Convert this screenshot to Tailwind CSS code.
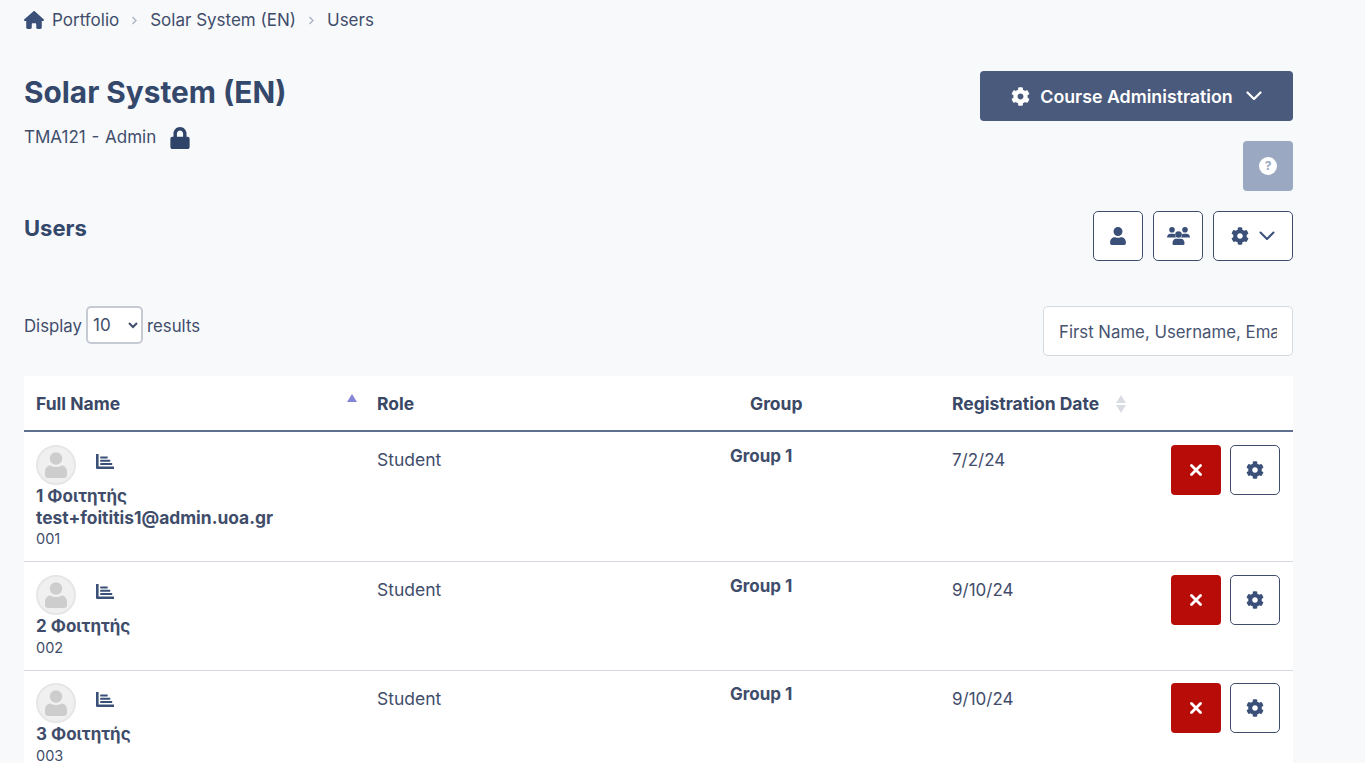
<!DOCTYPE html>
<html lang="en">
<head>
  <meta charset="UTF-8" />
  <title>Users</title>
  <script src="https://cdn.jsdelivr.net/npm/@tailwindcss/browser@4"></script>
</head>
<body class="bg-[#f8f9fb] font-['Inter',sans-serif] text-[#3f4d6b] h-[763px] overflow-hidden">
  <main class="w-[1293px] pl-6">
    <!-- breadcrumb -->
    <nav class="flex items-center h-10 pt-[2px] text-[17px]">
      <svg class="w-5 h-[18px] -mt-[2px] text-[#3a5078] mr-2" viewBox="0 0 576 512" fill="currentColor"><path d="M575.800 255.500c0 18-15 32.100-32 32.100h-32l.7 160.200c0 2.700-.2 5.400-.5 8.100V472c0 22.100-17.900 40-40 40H456c-1.100 0-2.200 0-3.300-.1-1.400.1-2.800.1-4.200.1H392c-22.100 0-40-17.900-40-40v-88c0-17.700-14.300-32-32-32h-64c-17.700 0-32 14.300-32 32v88c0 22.100-17.900 40-40 40h-55.900c-1.500 0-3-.1-4.500-.2-1.200.1-2.400.2-3.600.2H104c-22.100 0-40-17.900-40-40V360c0-.9 0-1.900.1-2.800v-69.600H32c-18 0-32-14-32-32.100 0-9 3-17 10-24L266.400 8c7-7 15-8 22-8s15 2 21 7l255.400 224.500c8 7 12 15 11 24z"/></svg>
      <a>Portfolio</a>
      <svg class="w-[7px] h-[9px] mx-3 -mt-[2px] text-[#aab2c2]" viewBox="0 0 7 9" fill="none" stroke="currentColor" stroke-width="1.300"><path d="M1.500 1l3.500 3.500L1.500 8"/></svg>
      <a>Solar System (EN)</a>
      <svg class="w-[7px] h-[9px] mx-3 -mt-[2px] text-[#aab2c2]" viewBox="0 0 7 9" fill="none" stroke="currentColor" stroke-width="1.300"><path d="M1.500 1l3.500 3.500L1.500 8"/></svg>
      <a>Users</a>
    </nav>

    <!-- course header -->
    <div class="flex justify-between items-start mt-[31px]">
      <div>
        <h1 class="text-[29.800px] leading-[42px] font-bold text-[#34486b]">Solar System (EN)</h1>
        <div class="flex items-center mt-[13px] h-6 text-[17px]">
          <span class="[word-spacing:1px]">TMA121 - Admin</span>
          <svg class="w-5 h-[22px] ml-[14px] text-[#2f4468]" viewBox="0 0 448 512" fill="currentColor"><path d="M400 224h-24v-72C376 68.200 307.800 0 224 0S72 68.200 72 152v72H48c-26.500 0-48 21.500-48 48v192c0 26.500 21.500 48 48 48h352c26.500 0 48-21.500 48-48V272c0-26.500-21.500-48-48-48zm-104 0H152v-72c0-39.700 32.300-72 72-72s72 32.300 72 72v72z"/></svg>
        </div>
      </div>
      <div class="flex flex-col items-end gap-5">
        <button class="flex items-center justify-center w-[313px] h-[50px] rounded-[4px] bg-[#4a5a7d] text-white font-semibold text-[17.800px]">
          <svg class="w-[19px] h-[19px] mr-[10px]" viewBox="0 0 512 512" fill="currentColor"><path d="M487.400 315.700l-42.600-24.600c4.300-23.200 4.300-47 0-70.200l42.600-24.600c4.900-2.800 7.100-8.600 5.500-14-11.100-35.600-30-67.800-54.700-94.600-3.800-4.100-10-5.100-14.800-2.300L380.800 110c-17.900-15.400-38.500-27.300-60.800-35.100V25.800c0-5.600-3.900-10.500-9.400-11.700-36.700-8.200-74.300-7.800-109.200 0-5.500 1.200-9.400 6.100-9.400 11.700V75c-22.200 7.900-42.800 19.800-60.800 35.100L88.700 85.500c-4.900-2.800-11-1.900-14.800 2.300-24.700 26.700-43.600 58.900-54.700 94.600-1.700 5.400.6 11.200 5.500 14L67.300 221c-4.300 23.200-4.300 47 0 70.200l-42.600 24.600c-4.900 2.800-7.100 8.600-5.500 14 11.100 35.600 30 67.800 54.700 94.600 3.800 4.100 10 5.100 14.800 2.300l42.600-24.600c17.900 15.400 38.500 27.300 60.800 35.100v49.200c0 5.600 3.900 10.500 9.400 11.700 36.700 8.200 74.300 7.800 109.200 0 5.500-1.200 9.400-6.100 9.400-11.700v-49.200c22.200-7.900 42.800-19.800 60.800-35.100l42.600 24.600c4.900 2.800 11 1.900 14.800-2.300 24.700-26.700 43.600-58.900 54.700-94.600 1.500-5.500-.7-11.300-5.600-14.100zM256 336c-44.100 0-80-35.900-80-80s35.900-80 80-80 80 35.900 80 80-35.900 80-80 80z"/></svg>
          <span class="pt-[2px]">Course Administration</span>
          <svg class="w-[16px] h-[10px] ml-[13px]" viewBox="0 0 16 10" fill="none" stroke="currentColor" stroke-width="2.200" stroke-linecap="round" stroke-linejoin="round"><path d="M1.500 1.500L8 8l6.500-6.500"/></svg>
        </button>
        <button class="flex items-center justify-center w-[50px] h-[50px] rounded-[4px] bg-[#9aa8c1]">
          <span class="flex items-center justify-center w-[18px] h-[18px] rounded-full bg-white text-[#9aa8c1] text-[12px] font-bold">?</span>
        </button>
      </div>
    </div>

    <!-- users heading -->
    <div class="flex justify-between items-start mt-5">
      <h2 class="text-[22px] leading-[34px] font-bold text-[#34486b]">Users</h2>
      <div class="flex gap-[10px]">
        <button class="flex items-center justify-center w-[50px] h-[50px] rounded-[5px] border border-[#3f4d6b] bg-white">
          <svg class="w-4 h-[18px] text-[#3a5078]" viewBox="0 0 448 512" fill="currentColor"><path d="M224 256c70.700 0 128-57.300 128-128S294.700 0 224 0 96 57.300 96 128s57.300 128 128 128zm89.600 32h-16.700c-22.200 10.200-46.900 16-72.900 16s-50.600-5.800-72.900-16h-16.700C60.200 288 0 348.200 0 422.400V464c0 26.500 21.500 48 48 48h352c26.500 0 48-21.500 48-48v-41.600c0-74.200-60.200-134.400-134.400-134.400z"/></svg>
        </button>
        <button class="flex items-center justify-center w-[50px] h-[50px] rounded-[5px] border border-[#3f4d6b] bg-white">
          <svg class="w-[23px] h-[18px] text-[#3a5078]" viewBox="0 0 23 18" fill="currentColor"><circle cx="5" cy="2.800" r="2.800"/><circle cx="18" cy="2.800" r="2.800"/><circle cx="11.500" cy="7.500" r="3.300"/><path d="M0 11c0-3 1.500-4.200 3.500-4.200h3c.6 0 1.100.2 1.500.5-.1 1.300.3 2.400 1 3.200H0zM23 11c0-3-1.500-4.200-3.500-4.200h-3c-.6 0-1.100.2-1.500.5.1 1.300-.3 2.400-1 3.200h9z"/><path d="M5.500 16.500c0-3 1.500-4.700 3.500-4.700h5c2 0 3.500 1.700 3.500 4.700 0 1-.7 1.500-1.700 1.500H7.200c-1 0-1.700-.5-1.700-1.500z"/></svg>
        </button>
        <button class="flex items-center justify-center w-[80px] h-[50px] rounded-[5px] border border-[#3f4d6b] bg-white text-[#3a5078]">
          <svg class="w-[18px] h-[18px] mr-[10px]" viewBox="0 0 512 512" fill="currentColor"><path d="M487.400 315.700l-42.600-24.600c4.300-23.200 4.300-47 0-70.200l42.600-24.600c4.900-2.800 7.100-8.600 5.500-14-11.100-35.600-30-67.800-54.700-94.600-3.800-4.100-10-5.100-14.800-2.300L380.800 110c-17.900-15.400-38.500-27.300-60.800-35.100V25.800c0-5.600-3.900-10.500-9.400-11.700-36.700-8.200-74.300-7.800-109.200 0-5.500 1.200-9.400 6.100-9.400 11.700V75c-22.200 7.900-42.800 19.800-60.800 35.100L88.700 85.500c-4.900-2.800-11-1.900-14.800 2.300-24.700 26.700-43.600 58.900-54.700 94.600-1.700 5.400.6 11.200 5.500 14L67.300 221c-4.300 23.200-4.300 47 0 70.200l-42.600 24.600c-4.900 2.800-7.100 8.600-5.500 14 11.100 35.600 30 67.800 54.700 94.600 3.800 4.100 10 5.100 14.800 2.300l42.600-24.600c17.900 15.400 38.500 27.300 60.800 35.100v49.200c0 5.600 3.900 10.500 9.400 11.700 36.700 8.200 74.300 7.800 109.200 0 5.500-1.200 9.400-6.100 9.400-11.700v-49.200c22.200-7.900 42.800-19.800 60.800-35.100l42.600 24.600c4.900 2.800 11 1.900 14.800-2.300 24.700-26.700 43.600-58.900 54.700-94.600 1.500-5.500-.7-11.300-5.600-14.100zM256 336c-44.100 0-80-35.900-80-80s35.900-80 80-80 80 35.900 80 80-35.900 80-80 80z"/></svg>
          <svg class="w-[16px] h-[10px]" viewBox="0 0 16 10" fill="none" stroke="currentColor" stroke-width="2" stroke-linecap="round" stroke-linejoin="round"><path d="M1.500 1.500L8 8l6.500-6.500"/></svg>
        </button>
      </div>
    </div>

    <!-- controls -->
    <div class="flex justify-between items-start mt-[45px]">
      <div class="flex items-center gap-1 text-[16.800px]">
        <span class="mt-[4px]">Display</span>
        <select class="w-[57px] h-[38px] pl-[1px] rounded-[5px] border-2 border-[#c5cad3] bg-white text-[17px] text-[#3f4d6b]"><option>10</option></select>
        <span class="mt-[4px]">results</span>
      </div>
      <input class="w-[250px] h-[50px] pl-[15px] pr-[15px] pt-[2px] rounded-[5px] border border-[#d5d9e0] bg-white text-[16.800px] placeholder:text-[#46536f]" placeholder="First Name, Username, Email" />
    </div>

    <!-- table -->
    <div class="mt-5 bg-white">
      <div class="flex h-[56px] border-b-2 border-[#5f6f8f] font-bold text-[17.500px] text-[#3a4866]">
        <div class="w-[341px] pl-3 pt-[15px] relative">Full Name
          <span class="absolute left-[323px] top-[18px] w-0 h-0 border-x-[5.500px] border-x-transparent border-b-[8px] border-b-[#8585d8]"></span>
        </div>
        <div class="w-[345px] pl-3 pt-[15px]">Role</div>
        <div class="w-[230px] pl-[40px] pt-[15px]">Group</div>
        <div class="flex-1 pl-3 pt-[15px] flex items-start">Registration Date
          <span class="ml-[17px] mt-[4px] flex flex-col gap-[2px]">
            <span class="w-0 h-0 border-x-[5.500px] border-x-transparent border-b-[8px] border-b-[#d9dce2]"></span>
            <span class="w-0 h-0 border-x-[5.500px] border-x-transparent border-t-[8px] border-t-[#d9dce2]"></span>
          </span>
        </div>
      </div>

      <!-- row 1 -->
      <div class="flex h-[130px] border-b border-[#d5d9e0] text-[17px]">
        <div class="w-[341px] pl-3 pt-[13px]">
          <div class="flex items-center">
            <div class="flex items-center justify-center w-10 h-10 rounded-full bg-[#f0f0f0] border-2 border-[#e6e6e6]">
              <svg class="w-[24px] h-[26px] text-[#cdcdcd]" viewBox="0 0 24 26" fill="currentColor"><circle cx="12" cy="6.500" r="6.200"/><path d="M1 20c0-4 2.500-6.500 5.500-6.500 1.500 1 3.500 1.600 5.500 1.600s4-.6 5.500-1.600c3 0 5.500 2.500 5.500 6.500v3c0 1.800-1.200 3-3 3H4c-1.800 0-3-1.200-3-3z"/></svg>
            </div>
            <svg class="w-[18px] h-[15px] ml-5 -mt-2 text-[#3a5078]" viewBox="0 0 18 15" fill="currentColor"><path d="M0 0h2.600v12.400H18V15H1.200A1.200 1.200 0 0 1 0 13.800z"/><rect x="4.200" y="2.400" width="7.500" height="2" rx=".4"/><rect x="4.200" y="5.800" width="10" height="2" rx=".4"/><rect x="4.200" y="9.100" width="12" height="2" rx=".4"/></svg>
          </div>
          <div class="font-bold leading-[22px]">1 Φοιτητής</div>
          <div class="font-bold leading-[22px] text-[17.400px]">test+foititis1@admin.uoa.gr</div>
          <div class="text-[14.500px] leading-[20px]">001</div>
        </div>
        <div class="w-[345px] pl-3 pt-[15px] text-[17.500px]">Student</div>
        <div class="w-[230px] pl-[20px] pt-[12px] font-bold">Group 1</div>
        <div class="w-[220px] pl-3 pt-[16px]">7/2/24</div>
        <div class="flex-1 flex justify-end gap-[9px] pr-[13px] pt-[13px]">
          <button class="flex items-center justify-center w-[50px] h-[50px] rounded-[4px] bg-[#b80c09]">
            <svg class="w-3 h-3 -mt-[1px] text-white" viewBox="0 0 12 12" fill="none" stroke="currentColor" stroke-width="2.800" stroke-linecap="round"><path d="M1.500 1.500l9 9M10.500 1.500l-9 9"/></svg>
          </button>
          <button class="flex items-center justify-center w-[50px] h-[50px] rounded-[5px] border border-[#3f4d6b] bg-white">
            <svg class="w-[18px] h-[18px] text-[#3a5078]" viewBox="0 0 512 512" fill="currentColor"><path d="M487.400 315.700l-42.600-24.600c4.300-23.200 4.300-47 0-70.200l42.600-24.600c4.900-2.800 7.100-8.600 5.500-14-11.100-35.600-30-67.800-54.700-94.600-3.800-4.100-10-5.100-14.800-2.300L380.800 110c-17.900-15.400-38.500-27.300-60.800-35.100V25.800c0-5.600-3.900-10.500-9.400-11.700-36.700-8.200-74.300-7.800-109.200 0-5.500 1.200-9.400 6.100-9.400 11.700V75c-22.200 7.900-42.800 19.800-60.800 35.100L88.700 85.500c-4.900-2.800-11-1.900-14.800 2.300-24.700 26.700-43.600 58.900-54.700 94.600-1.700 5.400.6 11.200 5.500 14L67.300 221c-4.300 23.200-4.300 47 0 70.200l-42.600 24.600c-4.900 2.800-7.100 8.600-5.500 14 11.100 35.600 30 67.800 54.700 94.600 3.800 4.100 10 5.100 14.800 2.300l42.600-24.600c17.900 15.400 38.500 27.300 60.800 35.100v49.200c0 5.600 3.900 10.500 9.400 11.700 36.700 8.200 74.300 7.800 109.200 0 5.500-1.200 9.400-6.100 9.400-11.700v-49.200c22.200-7.900 42.800-19.800 60.800-35.100l42.600 24.600c4.900 2.800 11 1.900 14.800-2.300 24.700-26.700 43.600-58.900 54.700-94.600 1.500-5.500-.7-11.300-5.600-14.100zM256 336c-44.100 0-80-35.900-80-80s35.900-80 80-80 80 35.900 80 80-35.900 80-80 80z"/></svg>
          </button>
        </div>
      </div>

      <!-- row 2 -->
      <div class="flex h-[109px] border-b border-[#d5d9e0] text-[17px]">
        <div class="w-[341px] pl-3 pt-[13px]">
          <div class="flex items-center">
            <div class="flex items-center justify-center w-10 h-10 rounded-full bg-[#f0f0f0] border-2 border-[#e6e6e6]">
              <svg class="w-[24px] h-[26px] text-[#cdcdcd]" viewBox="0 0 24 26" fill="currentColor"><circle cx="12" cy="6.500" r="6.200"/><path d="M1 20c0-4 2.500-6.500 5.500-6.500 1.500 1 3.500 1.600 5.500 1.600s4-.6 5.500-1.600c3 0 5.500 2.500 5.500 6.500v3c0 1.800-1.200 3-3 3H4c-1.800 0-3-1.200-3-3z"/></svg>
            </div>
            <svg class="w-[18px] h-[15px] ml-5 -mt-2 text-[#3a5078]" viewBox="0 0 18 15" fill="currentColor"><path d="M0 0h2.600v12.400H18V15H1.200A1.200 1.200 0 0 1 0 13.800z"/><rect x="4.200" y="2.400" width="7.500" height="2" rx=".4"/><rect x="4.200" y="5.800" width="10" height="2" rx=".4"/><rect x="4.200" y="9.100" width="12" height="2" rx=".4"/></svg>
          </div>
          <div class="font-bold leading-[22px]">2 Φοιτητής</div>
          <div class="text-[14.500px] leading-[20px] mt-[1px]">002</div>
        </div>
        <div class="w-[345px] pl-3 pt-[15px] text-[17.500px]">Student</div>
        <div class="w-[230px] pl-[20px] pt-[12px] font-bold">Group 1</div>
        <div class="w-[220px] pl-3 pt-[16px]">9/10/24</div>
        <div class="flex-1 flex justify-end gap-[9px] pr-[13px] pt-[13px]">
          <button class="flex items-center justify-center w-[50px] h-[50px] rounded-[4px] bg-[#b80c09]">
            <svg class="w-3 h-3 -mt-[1px] text-white" viewBox="0 0 12 12" fill="none" stroke="currentColor" stroke-width="2.800" stroke-linecap="round"><path d="M1.500 1.500l9 9M10.500 1.500l-9 9"/></svg>
          </button>
          <button class="flex items-center justify-center w-[50px] h-[50px] rounded-[5px] border border-[#3f4d6b] bg-white">
            <svg class="w-[18px] h-[18px] text-[#3a5078]" viewBox="0 0 512 512" fill="currentColor"><path d="M487.400 315.700l-42.600-24.600c4.300-23.200 4.300-47 0-70.200l42.600-24.600c4.900-2.800 7.100-8.600 5.500-14-11.100-35.600-30-67.800-54.700-94.600-3.800-4.100-10-5.100-14.800-2.300L380.800 110c-17.900-15.400-38.500-27.300-60.800-35.100V25.800c0-5.600-3.900-10.500-9.400-11.700-36.700-8.200-74.300-7.800-109.200 0-5.500 1.200-9.400 6.100-9.400 11.700V75c-22.200 7.900-42.800 19.800-60.800 35.100L88.700 85.500c-4.900-2.800-11-1.900-14.800 2.300-24.700 26.700-43.600 58.900-54.700 94.600-1.700 5.400.6 11.200 5.500 14L67.300 221c-4.300 23.200-4.300 47 0 70.200l-42.600 24.600c-4.900 2.800-7.100 8.600-5.500 14 11.100 35.600 30 67.800 54.700 94.600 3.800 4.100 10 5.100 14.800 2.300l42.600-24.600c17.900 15.400 38.500 27.300 60.800 35.100v49.200c0 5.600 3.900 10.500 9.400 11.700 36.700 8.200 74.300 7.800 109.200 0 5.500-1.200 9.400-6.100 9.400-11.700v-49.200c22.200-7.900 42.800-19.800 60.800-35.100l42.600 24.600c4.900 2.800 11 1.900 14.800-2.300 24.700-26.700 43.600-58.900 54.700-94.600 1.500-5.500-.7-11.300-5.600-14.100zM256 336c-44.100 0-80-35.900-80-80s35.900-80 80-80 80 35.900 80 80-35.900 80-80 80z"/></svg>
          </button>
        </div>
      </div>

      <!-- row 3 -->
      <div class="flex h-[109px] text-[17px]">
        <div class="w-[341px] pl-3 pt-[12px]">
          <div class="flex items-center">
            <div class="flex items-center justify-center w-10 h-10 rounded-full bg-[#f0f0f0] border-2 border-[#e6e6e6]">
              <svg class="w-[24px] h-[26px] text-[#cdcdcd]" viewBox="0 0 24 26" fill="currentColor"><circle cx="12" cy="6.500" r="6.200"/><path d="M1 20c0-4 2.500-6.500 5.500-6.500 1.500 1 3.500 1.600 5.500 1.600s4-.6 5.500-1.600c3 0 5.500 2.500 5.500 6.500v3c0 1.800-1.200 3-3 3H4c-1.800 0-3-1.200-3-3z"/></svg>
            </div>
            <svg class="w-[18px] h-[15px] ml-5 -mt-2 text-[#3a5078]" viewBox="0 0 18 15" fill="currentColor"><path d="M0 0h2.600v12.400H18V15H1.200A1.200 1.200 0 0 1 0 13.800z"/><rect x="4.200" y="2.400" width="7.500" height="2" rx=".4"/><rect x="4.200" y="5.800" width="10" height="2" rx=".4"/><rect x="4.200" y="9.100" width="12" height="2" rx=".4"/></svg>
          </div>
          <div class="font-bold leading-[22px]">3 Φοιτητής</div>
          <div class="text-[14.500px] leading-[20px] mt-[1px]">003</div>
        </div>
        <div class="w-[345px] pl-3 pt-[15px] text-[17.500px]">Student</div>
        <div class="w-[230px] pl-[20px] pt-[11px] font-bold">Group 1</div>
        <div class="w-[220px] pl-3 pt-[16px]">9/10/24</div>
        <div class="flex-1 flex justify-end gap-[9px] pr-[13px] pt-[12px]">
          <button class="flex items-center justify-center w-[50px] h-[50px] rounded-[4px] bg-[#b80c09]">
            <svg class="w-3 h-3 -mt-[1px] text-white" viewBox="0 0 12 12" fill="none" stroke="currentColor" stroke-width="2.800" stroke-linecap="round"><path d="M1.500 1.500l9 9M10.500 1.500l-9 9"/></svg>
          </button>
          <button class="flex items-center justify-center w-[50px] h-[50px] rounded-[5px] border border-[#3f4d6b] bg-white">
            <svg class="w-[18px] h-[18px] text-[#3a5078]" viewBox="0 0 512 512" fill="currentColor"><path d="M487.400 315.700l-42.600-24.600c4.300-23.200 4.300-47 0-70.200l42.600-24.600c4.900-2.800 7.100-8.600 5.500-14-11.100-35.600-30-67.800-54.700-94.600-3.800-4.100-10-5.100-14.800-2.300L380.800 110c-17.900-15.400-38.500-27.300-60.800-35.100V25.800c0-5.600-3.900-10.500-9.400-11.700-36.700-8.200-74.300-7.800-109.200 0-5.500 1.200-9.400 6.100-9.400 11.700V75c-22.200 7.900-42.800 19.800-60.800 35.100L88.700 85.500c-4.900-2.800-11-1.900-14.800 2.300-24.700 26.700-43.600 58.900-54.700 94.600-1.700 5.400.6 11.200 5.500 14L67.300 221c-4.300 23.200-4.300 47 0 70.200l-42.600 24.600c-4.900 2.800-7.100 8.600-5.500 14 11.100 35.600 30 67.800 54.700 94.600 3.800 4.100 10 5.100 14.800 2.300l42.600-24.600c17.900 15.400 38.500 27.300 60.800 35.100v49.200c0 5.600 3.900 10.500 9.400 11.700 36.700 8.200 74.300 7.800 109.200 0 5.500-1.200 9.400-6.100 9.400-11.700v-49.200c22.200-7.900 42.800-19.800 60.800-35.100l42.600 24.600c4.900 2.800 11 1.900 14.800-2.300 24.700-26.700 43.600-58.900 54.700-94.600 1.500-5.500-.7-11.300-5.600-14.100zM256 336c-44.100 0-80-35.900-80-80s35.900-80 80-80 80 35.900 80 80-35.900 80-80 80z"/></svg>
          </button>
        </div>
      </div>
    </div>
  </main>
</body>
</html>
